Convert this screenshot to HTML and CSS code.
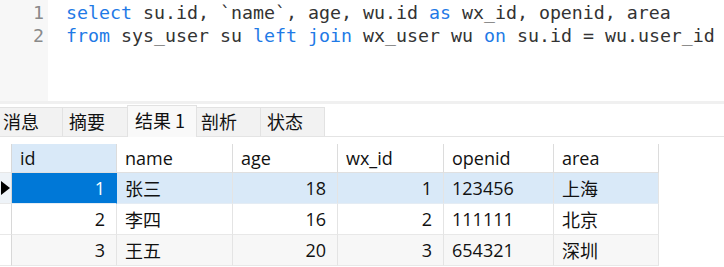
FILE: index.html
```html
<!DOCTYPE html>
<html>
<head>
<meta charset="utf-8">
<link rel="stylesheet" href="styles.css">
</head>
<body>
<div class="editor">
  <div class="gutter">
    <div class="ln">1</div>
    <div class="ln">2</div>
  </div>
  <div class="code">
    <div class="line"><span class="kw">select</span> su.id, `name`, age, wu.id <span class="kw">as</span> wx_id, openid, area</div>
    <div class="line"><span class="kw">from</span> sys_user su <span class="kw">left join</span> wx_user wu <span class="kw">on</span> su.id = wu.user_id</div>
  </div>
</div>
<div class="band"></div>
<div class="tabs">
  <div class="tab t1">消息</div>
  <div class="tab t2">摘要</div>
  <div class="tab t3 active">结果 1</div>
  <div class="tab t4">剖析</div>
  <div class="tab t5">状态</div>
</div>
<div class="grid">
  <div class="c ind"></div>
  <div class="c hd sel-col">id</div>
  <div class="c hd">name</div>
  <div class="c hd">age</div>
  <div class="c hd">wx_id</div>
  <div class="c hd">openid</div>
  <div class="c hd">area</div>

  <div class="c ind cur"><span class="arrow"></span></div>
  <div class="c num r1 focus">1</div>
  <div class="c r1">张三</div>
  <div class="c num r1">18</div>
  <div class="c num r1">1</div>
  <div class="c r1">123456</div>
  <div class="c r1">上海</div>

  <div class="c ind"></div>
  <div class="c num">2</div>
  <div class="c">李四</div>
  <div class="c num">16</div>
  <div class="c num">2</div>
  <div class="c">111111</div>
  <div class="c">北京</div>

  <div class="c ind"></div>
  <div class="c num alt">3</div>
  <div class="c alt">王五</div>
  <div class="c num alt">20</div>
  <div class="c num alt">3</div>
  <div class="c alt">654321</div>
  <div class="c alt">深圳</div>
</div>
</body>
</html>
```

FILE: styles.css
```css
html, body {
  margin: 0;
  padding: 0;
  background: #ffffff;
  width: 724px;
  height: 267px;
  overflow: hidden;
}

.editor {
  display: flex;
  height: 101px;
  background: #ffffff;
}

.gutter {
  width: 48px;
  background: #f7f7f7;
  box-sizing: border-box;
  padding-top: 1px;
  padding-right: 4px;
  flex: none;
}

.ln, .line {
  font-family: "DejaVu Sans Mono", "Liberation Mono", monospace;
  font-size: 18.27px;
  line-height: 23px;
  height: 23px;
  white-space: pre;
}

.ln {
  color: #8a8a8a;
  text-align: right;
}

.code {
  padding-left: 18px;
  padding-top: 1px;
  color: #333333;
}

.kw {
  color: #1f7ae6;
}

.band {
  height: 3px;
  background: #f0f0f0;
}

.tabs {
  display: flex;
  align-items: flex-end;
  height: 32px;
  border-bottom: 1px solid #e4e4e4;
  box-sizing: content-box;
}

.tab {
  height: 29px;
  box-sizing: border-box;
  background: #f2f2f2;
  border: 1px solid #e2e2e2;
  border-bottom: none;
  border-left: none;
  font-family: "Noto Sans CJK SC", sans-serif;
  font-size: 18px;
  line-height: 26px;
  color: #111111;
  white-space: nowrap;
  flex: none;
}

.t1 { width: 63px; padding-left: 3px; }
.t2 { width: 65px; padding-left: 6px; }
.t3 { width: 69px; padding-left: 7px; }
.t4 { width: 64px; padding-left: 4px; }
.t5 { width: 64px; padding-left: 6px; }

.tab.active {
  height: 31px;
  background: #f9f9f9;
  border-left: 1px solid #e2e2e2;
  margin-left: -1px;
  width: 70px;
  line-height: 28px;
  margin-bottom: -1px;
  height: 32px;
}

.grid {
  margin-top: 7px;
  display: grid;
  grid-template-columns: 12px 105px 116px 105px 106px 110px 105px;
  grid-template-rows: 29px 31px 31px 31px;
  width: 659px;
}

.c {
  box-sizing: border-box;
  border-right: 1px solid #e4e4e4;
  border-bottom: 1px solid #e8e8e8;
  font-family: "Open Sans", "Noto Sans CJK SC", sans-serif;
  font-size: 18px;
  color: #111111;
  padding-left: 8px;
  padding-right: 11px;
  display: flex;
  align-items: center;
  white-space: nowrap;
  overflow: hidden;
}

.hd {
  border-right: 1px solid #dcdcdc;
  border-bottom: 1px solid #e0e0e0;
  background: #ffffff;
}

.sel-col {
  background: #d9e9f8;
}

.num {
  justify-content: flex-end;
}

.ind {
  padding: 0;
  border-right: 1px solid #d8d8d8;
  background: #ffffff;
}

.ind.cur {
  background: #eef3f8;
}

.arrow {
  width: 0;
  height: 0;
  border-top: 7px solid transparent;
  border-bottom: 7px solid transparent;
  border-left: 9px solid #000000;
  margin-left: 1px;
}

.r1 {
  background: #d9e9f8;
  border-bottom: 1px solid #e4ecf4;
}

.r1.focus {
  background: #0078d7;
  color: #ffffff;
  border-right-color: #0078d7;
}

.alt {
  background: #f7f7f7;
}
```
